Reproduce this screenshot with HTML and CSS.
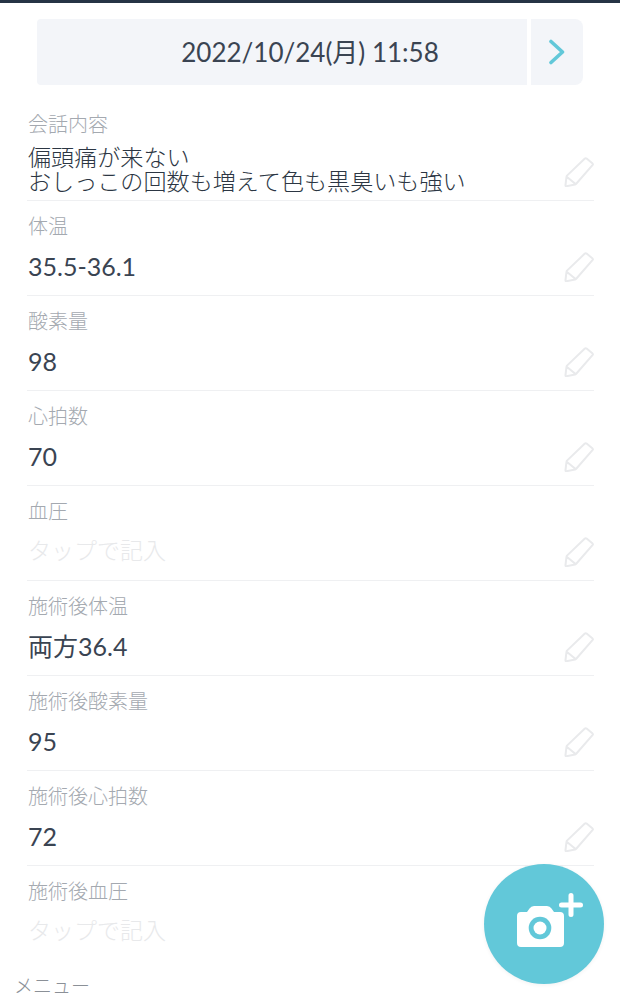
FILE: index.html
```html
<!DOCTYPE html>
<html lang="ja">
<head>
  <meta charset="UTF-8">
  <title>記録</title>
  <link rel="stylesheet" href="styles.css">
</head>
<body>
  <svg class="sprite" width="0" height="0">
    <symbol id="pencil" viewBox="0 0 30 30">
      <path d="M22.6 1.6 L28.6 6.6 Q29.2 7.2 28.7 7.9 L12 27 Q11.6 27.5 11 27.6 L2.6 29.2 Q1.3 29.4 1.5 28 L2.5 19.8 Q2.6 19.1 3 18.6 L20.6 1.8 Q21.6 0.9 22.6 1.6 Z M3 20 L11.6 27" fill="none" stroke="#e9eaec" stroke-width="2" stroke-linejoin="round"/>
    </symbol>
  </svg>

  <div class="page">
    <div class="date-bar">
      <div class="date">2022/10/24(月) 11:58</div>
      <button class="next">
        <svg width="18" height="26" viewBox="0 0 18 26"><path d="M3 2.5 L14.5 13 L3 23.5" fill="none" stroke="#62c8d9" stroke-width="3.6" stroke-linecap="round" stroke-linejoin="round"/></svg>
      </button>
    </div>

    <div class="rows">
      <div class="row first">
        <div class="label">会話内容</div>
        <div class="value multi">偏頭痛が来ない<br>おしっこの回数も増えて色も黒臭いも強い</div>
        <svg class="edit"><use href="#pencil"/></svg>
      </div>
      <div class="row">
        <div class="label">体温</div>
        <div class="value">35.5-36.1</div>
        <svg class="edit"><use href="#pencil"/></svg>
      </div>
      <div class="row">
        <div class="label">酸素量</div>
        <div class="value">98</div>
        <svg class="edit"><use href="#pencil"/></svg>
      </div>
      <div class="row">
        <div class="label">心拍数</div>
        <div class="value">70</div>
        <svg class="edit"><use href="#pencil"/></svg>
      </div>
      <div class="row">
        <div class="label">血圧</div>
        <div class="value empty">タップで記入</div>
        <svg class="edit"><use href="#pencil"/></svg>
      </div>
      <div class="row">
        <div class="label">施術後体温</div>
        <div class="value">両方36.4</div>
        <svg class="edit"><use href="#pencil"/></svg>
      </div>
      <div class="row">
        <div class="label">施術後酸素量</div>
        <div class="value">95</div>
        <svg class="edit"><use href="#pencil"/></svg>
      </div>
      <div class="row">
        <div class="label">施術後心拍数</div>
        <div class="value">72</div>
        <svg class="edit"><use href="#pencil"/></svg>
      </div>
      <div class="row last">
        <div class="label">施術後血圧</div>
        <div class="value empty">タップで記入</div>
      </div>
    </div>

    <div class="menu-title">メニュー</div>

    <button class="fab">
      <svg width="120" height="120" viewBox="0 0 120 120">
        <path d="M37 48 H43 L45.500 44.500 Q47 42 50 42 H63 Q66 42 67.500 44.500 L70 48 H76 Q80 48 80 52 V79 Q80 83 76 83 H37 Q33 83 33 79 V52 Q33 48 37 48 Z" fill="#fff"/>
        <circle cx="56" cy="64" r="11.300" fill="#62c8d9"/>
        <circle cx="56" cy="64" r="6.500" fill="#fff"/>
        <path d="M87 31.500 V50.500 M77.500 41 H96.500" stroke="#fff" stroke-width="5" stroke-linecap="round"/>
      </svg>
    </button>
  </div>
</body>
</html>
```

FILE: styles.css
```css
* {
  box-sizing: border-box;
}

html, body {
  margin: 0;
  height: 1000px;
  overflow: hidden;
  background: #fff;
}

body {
  font-family: "Noto Sans CJK JP", sans-serif;
  font-weight: 300;
  color: #2c3643;
}

.sprite {
  display: block;
}

.page {
  position: relative;
  height: 1000px;
  border-top: 3px solid #263445;
  overflow: hidden;
}

.date-bar {
  display: flex;
  gap: 4px;
  height: 66px;
  margin: 16px 37px 0;
}

.date {
  width: 490px;
  padding-left: 56px;
  background: #f3f5f9;
  border-radius: 4px 0 0 4px;
  font-family: Lato, "Noto Sans CJK JP", sans-serif;
  font-weight: 400;
  font-size: 26px;
  line-height: 66px;
  text-align: center;
  color: #3a4452;
}

.next {
  width: 52px;
  padding: 0;
  border: none;
  background: #f3f5f9;
  border-radius: 0 8px 8px 0;
  display: flex;
  align-items: center;
  justify-content: center;
}

.rows {
  margin: 14px 26px 0 27px;
}

.row {
  position: relative;
  height: 95px;
  padding: 13px 1px 0;
  border-bottom: 1px solid #eff0f2;
}

.row.first {
  height: 102px;
}

.row.last {
  border-bottom: none;
  height: 104px;
}

.label {
  font-size: 20px;
  line-height: 24px;
  color: #a4a9b0;
}

.value {
  margin-top: 13px;
  font-family: Lato, "Noto Sans CJK JP", sans-serif;
  font-weight: 400;
  font-size: 25px;
  line-height: 30px;
  color: #3a4452;
}

.value.multi {
  margin-top: 8px;
  font-family: "Noto Sans CJK JP", sans-serif;
  font-weight: 300;
  font-size: 23.1px;
  line-height: 24px;
  color: #2c3643;
}

.value.empty {
  margin-top: 11px;
  color: #e8e9eb;
  font-family: "Noto Sans CJK JP", sans-serif;
  font-weight: 300;
  font-size: 23px;
}

.edit {
  position: absolute;
  right: 0;
  bottom: 13px;
  width: 30px;
  height: 30px;
}

.menu-title {
  margin: 3px 0 0 14px;
  font-size: 19px;
  line-height: 24px;
  color: #8b9097;
}

.fab {
  position: absolute;
  left: 484px;
  top: 861px;
  width: 120px;
  height: 120px;
  padding: 0;
  border: none;
  border-radius: 50%;
  background: #62c8d9;
  box-shadow: 0 1px 4px rgba(0, 0, 0, 0.06);
}

.fab svg {
  display: block;
}
```
